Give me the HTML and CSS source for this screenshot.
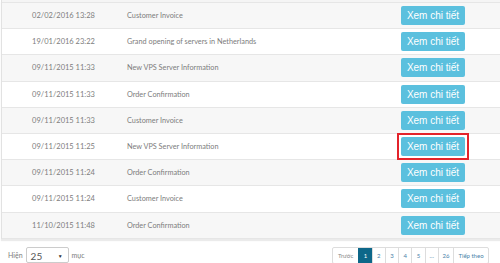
FILE: index.html
```html
<!DOCTYPE html>
<html lang="vi">
<head>
<meta charset="utf-8">
<link rel="stylesheet" href="styles.css">
</head>
<body>
<div class="panel">
  <div class="table">
    <div class="row odd"><div class="c-date">02/02/2016 13:28</div><div class="c-subj">Customer Invoice</div><div class="c-act"><span class="btn">Xem chi tiết</span></div></div>
    <div class="row"><div class="c-date">19/01/2016 23:22</div><div class="c-subj">Grand opening of servers in Netherlands</div><div class="c-act"><span class="btn">Xem chi tiết</span></div></div>
    <div class="row odd"><div class="c-date">09/11/2015 11:33</div><div class="c-subj">New VPS Server Information</div><div class="c-act"><span class="btn">Xem chi tiết</span></div></div>
    <div class="row"><div class="c-date">09/11/2015 11:33</div><div class="c-subj">Order Confirmation</div><div class="c-act"><span class="btn">Xem chi tiết</span></div></div>
    <div class="row odd"><div class="c-date">09/11/2015 11:33</div><div class="c-subj">Customer Invoice</div><div class="c-act"><span class="btn">Xem chi tiết</span></div></div>
    <div class="row"><div class="c-date">09/11/2015 11:25</div><div class="c-subj">New VPS Server Information</div><div class="c-act"><span class="mark"><span class="btn">Xem chi tiết</span></span></div></div>
    <div class="row odd"><div class="c-date">09/11/2015 11:24</div><div class="c-subj">Order Confirmation</div><div class="c-act"><span class="btn">Xem chi tiết</span></div></div>
    <div class="row"><div class="c-date">09/11/2015 11:24</div><div class="c-subj">Customer Invoice</div><div class="c-act"><span class="btn">Xem chi tiết</span></div></div>
    <div class="row odd"><div class="c-date">11/10/2015 11:48</div><div class="c-subj">Order Confirmation</div><div class="c-act"><span class="btn">Xem chi tiết</span></div></div>
  </div>
</div>
<div class="footer">
  <div class="length">
    <span>Hiện</span>
    <span class="select"><span class="sel-val">25</span><span class="sel-arrow">▼</span></span>
    <span>mục</span>
  </div>
  <div class="pager">
    <span class="pg pg-prev">Trước</span>
    <span class="pg active">1</span>
    <span class="pg">2</span>
    <span class="pg">3</span>
    <span class="pg">4</span>
    <span class="pg">5</span>
    <span class="pg">…</span>
    <span class="pg pg-wide">26</span>
    <span class="pg pg-next">Tiếp theo</span>
  </div>
</div>
</body>
</html>
```
FILE: styles.css
```css
html, body {
  margin: 0;
  padding: 0;
  background: #fff;
  width: 500px;
  height: 263px;
  overflow: hidden;
}
body {
  font-family: "Lato", "Open Sans", sans-serif;
  color: #7d7d7d;
}
.panel {
  margin-left: 1px;
  padding-top: 2px;
  background: #f5f5f5;
  border-left: 1px solid #e2e2e2;
  box-shadow: 0 2px 1px rgba(0,0,0,0.08);
}
.table {
  background: #fff;
  border-top: 1px solid #e6e6e6;
}
.row {
  display: flex;
  align-items: center;
  height: 26.2px;
  box-sizing: border-box;
  border-bottom: 1px solid #e6e6e6;
  font-size: 7.3px;
}
.row.odd {
  background: #f7f7f7;
}
.c-date {
  width: 123px;
  text-align: center;
  font-size: 7.5px;
}
.c-subj {
  flex: 1;
  padding-left: 2px;
}
.c-act {
  width: 101px;
  display: flex;
  align-items: center;
}
.btn {
  display: inline-block;
  box-sizing: border-box;
  width: 64px;
  height: 19px;
  line-height: 19px;
  margin-left: 2px;
  text-align: center;
  background: #5bc0de;
  color: #fff;
  border-radius: 2px;
  font-family: "Liberation Sans", Arial, sans-serif;
  font-size: 10px;
}
.mark {
  display: inline-flex;
  position: relative;
}
.mark::after {
  content: "";
  position: absolute;
  left: -2px;
  top: -4px;
  right: -4px;
  bottom: -4px;
  border: 2.5px solid #e3232b;
}
.footer {
  display: flex;
  justify-content: space-between;
  align-items: center;
  padding: 8px 11px 0 8px;
}
.length {
  display: flex;
  align-items: center;
  gap: 3px;
  font-size: 7px;
}
.select {
  display: flex;
  align-items: center;
  justify-content: space-between;
  box-sizing: border-box;
  width: 43px;
  height: 16px;
  padding: 2px 5px 0 4px;
  border: 1px solid #ccc;
  border-radius: 2px;
  color: #555;
}
.sel-val {
  font-size: 10px;
}
.sel-arrow {
  font-size: 5px;
  color: #333;
}
.pager {
  display: flex;
  border: 1px solid #ddd;
  border-radius: 2px;
  font-size: 6px;
}
.pg {
  display: flex;
  align-items: center;
  justify-content: center;
  box-sizing: border-box;
  width: 13.3px;
  height: 15px;
  border-left: 1px solid #ddd;
  color: #4a7fa8;
}
.pg:first-child {
  border-left: none;
}
.pg-prev {
  width: 25px;
  color: #888;
}
.pg-wide {
  width: 15px;
}
.pg-next {
  width: 35px;
}
.pg.active {
  background: #0d6789;
  color: #fff;
  border-color: #0d6789;
}
```
